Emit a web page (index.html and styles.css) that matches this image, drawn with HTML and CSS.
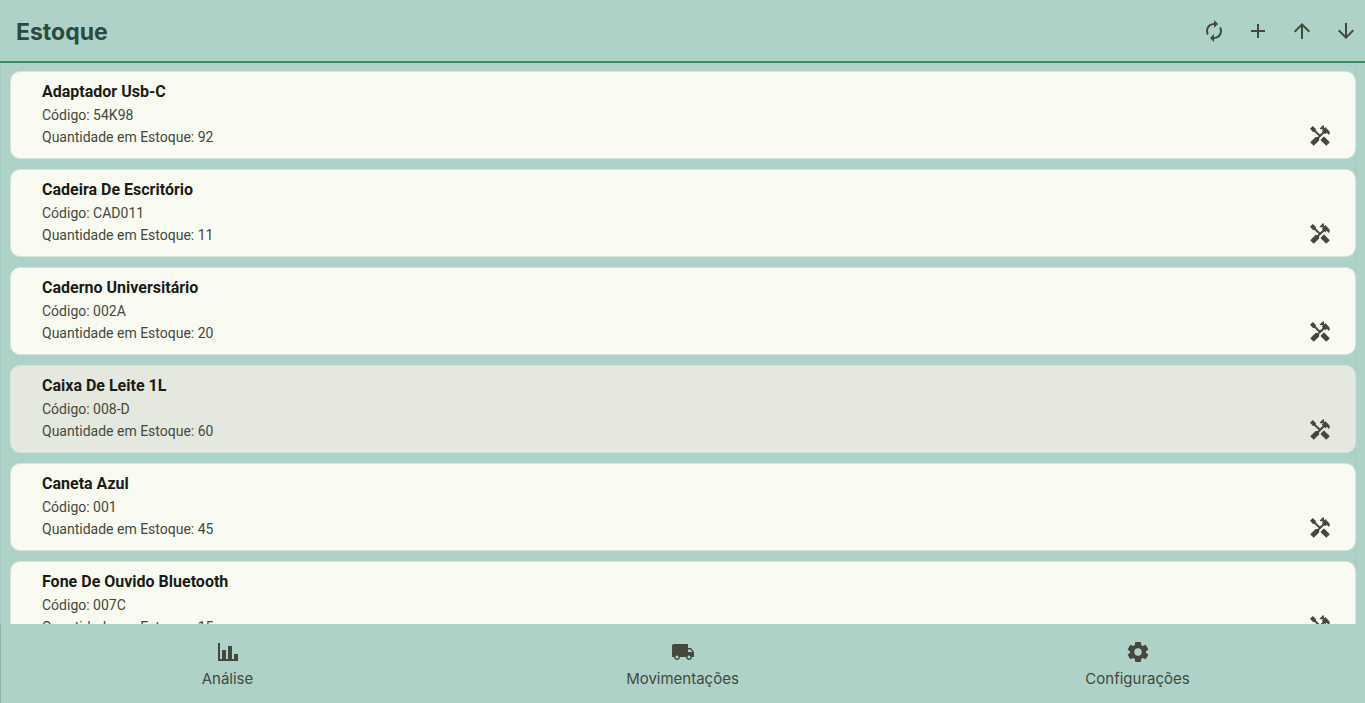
FILE: index.html
```html
<!DOCTYPE html>
<html lang="pt-BR">
<head>
<meta charset="utf-8">
<meta name="viewport" content="width=device-width, initial-scale=1">
<title>Estoque</title>
<link rel="stylesheet" href="styles.css">
</head>
<body>
<svg class="sprite" aria-hidden="true">
  <symbol id="tools" viewBox="0 0 24 24">
    <path d="M21.800 18.300 16.370 12.870h-.99l-2.540 2.540v.99l5.430 5.430z"/>
    <path d="M17.34 10.19l1.41-1.41 2.12 2.12c1.17-1.17 1.17-3.07 0-4.24l-3.54-3.54-1.41 1.41V1.71L15.22 1l-3.54 3.54.71.71h2.83l-1.41 1.41 1.06 1.06-2.89 2.89-4.13-4.13V5.06L4.83 2.04 2 4.87 5.03 7.900h1.410l4.130 4.130-.85.85H7.600L2.200 18.300l3.520 3.520 5.410-5.410v-2.120l5.150-5.150z"/>
  </symbol>
</svg>
<header class="topbar">
  <h1 class="title">Estoque</h1>
  <div class="actions">
    <button class="icon-button" type="button" aria-label="Atualizar"><svg class="icon" viewBox="0 0 24 24"><path d="M12 6v3l4-4-4-4v3c-4.42 0-8 3.58-8 8 0 1.57.46 3.03 1.24 4.26L6.7 14.8c-.45-.83-.7-1.79-.7-2.8 0-3.31 2.69-6 6-6zm6.76 1.74L17.3 9.2c.44.84.7 1.79.7 2.8 0 3.31-2.69 6-6 6v-3l-4 4 4 4v-3c4.42 0 8-3.58 8-8 0-1.57-.46-3.03-1.24-4.26z"/></svg></button>
    <button class="icon-button" type="button" aria-label="Adicionar"><svg class="icon" viewBox="0 0 24 24"><path d="M19 13h-6v6h-2v-6H5v-2h6V5h2v6h6z"/></svg></button>
    <button class="icon-button" type="button" aria-label="Entrada"><svg class="icon" viewBox="0 0 24 24"><path d="M4 12l1.41 1.41L11 7.83V20h2V7.83l5.58 5.59L20 12l-8-8z"/></svg></button>
    <button class="icon-button" type="button" aria-label="Saída"><svg class="icon" viewBox="0 0 24 24"><path d="M20 12l-1.41-1.41L13 16.17V4h-2v12.17l-5.58-5.59L4 12l8 8z"/></svg></button>
  </div>
</header>
<main class="content">
  <ul class="stock">
    <li class="card"><div><h2 class="name">Adaptador Usb-C</h2><p class="detail">Código: 54K98</p><p class="detail">Quantidade em Estoque: 92</p></div><button class="icon-button" type="button" aria-label="Editar Adaptador Usb-C"><svg class="icon"><use href="#tools"/></svg></button></li>
    <li class="card"><div><h2 class="name">Cadeira De Escritório</h2><p class="detail">Código: CAD011</p><p class="detail">Quantidade em Estoque: 11</p></div><button class="icon-button" type="button" aria-label="Editar Cadeira De Escritório"><svg class="icon"><use href="#tools"/></svg></button></li>
    <li class="card"><div><h2 class="name">Caderno Universitário</h2><p class="detail">Código: 002A</p><p class="detail">Quantidade em Estoque: 20</p></div><button class="icon-button" type="button" aria-label="Editar Caderno Universitário"><svg class="icon"><use href="#tools"/></svg></button></li>
    <li class="card card-active"><div><h2 class="name">Caixa De Leite 1L</h2><p class="detail">Código: 008-D</p><p class="detail">Quantidade em Estoque: 60</p></div><button class="icon-button" type="button" aria-label="Editar Caixa De Leite 1L"><svg class="icon"><use href="#tools"/></svg></button></li>
    <li class="card"><div><h2 class="name">Caneta Azul</h2><p class="detail">Código: 001</p><p class="detail">Quantidade em Estoque: 45</p></div><button class="icon-button" type="button" aria-label="Editar Caneta Azul"><svg class="icon"><use href="#tools"/></svg></button></li>
    <li class="card"><div><h2 class="name">Fone De Ouvido Bluetooth</h2><p class="detail">Código: 007C</p><p class="detail">Quantidade em Estoque: 15</p></div><button class="icon-button" type="button" aria-label="Editar Fone De Ouvido Bluetooth"><svg class="icon"><use href="#tools"/></svg></button></li>
  </ul>
</main>
<nav class="tabs">
  <a class="tab" href="#analise"><svg class="icon" viewBox="0 0 24 24"><path d="M2 3h2v16h18v2H2zM6 10h4v9H6zM12 6h4v13h-4zM18 14h4v6h-4z"/></svg>Análise</a>
  <a class="tab" href="#movimentacoes"><svg class="icon" viewBox="0 0 24 24"><path d="M20 8h-3V4H3c-1.1 0-2 .9-2 2v11h2c0 1.66 1.34 3 3 3s3-1.34 3-3h6c0 1.66 1.34 3 3 3s3-1.34 3-3h2v-5zM6 18.5a1.5 1.5 0 1 1 0-3 1.5 1.5 0 0 1 0 3zm13.5-9 1.96 2.5H17V9.500zm-1.500 9a1.500 1.500 0 1 1 0-3 1.500 1.500 0 0 1 0 3z"/></svg>Movimentações</a>
  <a class="tab" href="#configuracoes"><svg class="icon" viewBox="0 0 24 24"><path fill-rule="evenodd" d="M9.300 2h5.400l.5 3.100 1.500.9 3-1.200 2.700 4.600-2.500 2v1.300l2.500 2-2.700 4.600-3-1.200-1.500.9-.5 3.100H9.300L8.800 19l-1.500-.9-3 1.200-2.700-4.600 2.500-2v-1.300l-2.500-2 2.700-4.600 3 1.200 1.500-.9zM12 8.300a3.700 3.700 0 1 0 0 7.400 3.700 3.700 0 0 0 0-7.400z"/></svg>Configurações</a>
</nav>
</body>
</html>
```
FILE: styles.css
```css
* { box-sizing: border-box; }
body {
  margin: 0;
  height: 100vh;
  display: flex;
  flex-direction: column;
  background: #aed2c8;
  color: #44483d;
  font-family: Roboto, "Liberation Sans", sans-serif;
}
.sprite { display: none; }
.icon { display: block; width: 24px; height: 24px; fill: currentColor; }
.icon-button {
  padding: 0;
  border: 0;
  background: none;
  color: inherit;
  cursor: pointer;
}
.topbar {
  display: flex;
  align-items: flex-start;
  justify-content: space-between;
  padding: 16px 7px 13px 16px;
  border-bottom: 2px solid #339161;
}
.title {
  margin: 0;
  color: #2a4b42;
  font: 700 23px/32px Inter, "Open Sans", sans-serif;
}
.actions { display: flex; gap: 20px; padding-top: 3px; }
.content { flex: 1; min-height: 0; overflow-y: auto; scrollbar-width: none; }
.stock {
  display: flex;
  flex-direction: column;
  gap: 10px;
  margin: 0 9px 0 0;
  padding: 8px 0 10px 9px;
  border: solid #a5cabf;
  border-width: 0 1px;
  list-style: none;
}
.card {
  display: flex;
  justify-content: space-between;
  align-items: flex-end;
  margin-right: -1px;
  padding: 8px 23px 10px 31px;
  border: 1px solid #d5e5db;
  border-radius: 10px;
  background: #f9fbf2;
}
.card-active { background: #e5e8df; }
.name { margin: 0; color: #1a1c16; font-size: 16px; line-height: 24px; font-weight: 700; }
.detail { margin: 0; font-size: 14px; line-height: 22px; }
.tabs {
  display: grid;
  grid-template-columns: repeat(3, 1fr);
  box-shadow: inset 1px 0 #8fb0a6;
}
.tab {
  display: flex;
  flex-direction: column;
  align-items: center;
  gap: 5px;
  padding: 16px 0 14px;
  color: inherit;
  font: 400 15px/20px Inter, "Open Sans", sans-serif;
  text-decoration: none;
}
```
